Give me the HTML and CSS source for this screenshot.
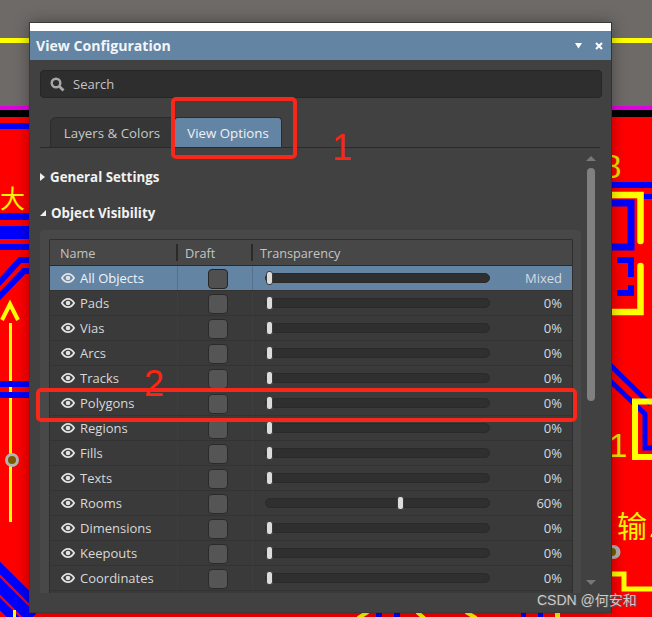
FILE: index.html
```html
<!DOCTYPE html>
<html lang="en">
<head>
  <meta charset="UTF-8">
  <title>View Configuration</title>
  <link rel="stylesheet" href="styles.css">
</head>
<body>
  <!-- PCB canvas behind the panel -->
  <svg class="board" width="652" height="617" viewBox="0 0 652 617">
    <rect x="0" y="0" width="652" height="617" fill="#6e6a68"/>
    <rect x="0" y="38" width="652" height="5" fill="#ffff00"/>
    <rect x="0" y="106" width="652" height="511" fill="#ff0000"/>
    <rect x="0" y="106" width="652" height="4" fill="#e000e0"/>
    <rect x="0" y="110" width="652" height="7" fill="#000"/>

    <!-- left side -->
    <rect x="0" y="123" width="30" height="6" fill="#0000ff"/>
    <rect x="0" y="213" width="30" height="7" fill="#0000ff"/>
    <rect x="0" y="226" width="30" height="13" fill="#0000ff"/>
    <rect x="0" y="244" width="30" height="6" fill="#0000ff"/>
    <path d="M-2 284 L20 260 L30 260 M-2 298 L24 271 L30 271" stroke="#0000ff" stroke-width="6" fill="none"/>
    <path d="M2 320 L10 304 L18 320" stroke="#ffff00" stroke-width="4" fill="none"/>
    <rect x="9" y="323" width="3" height="199" fill="#ffff00"/>
    <rect x="0" y="381" width="30" height="6" fill="#0000ff"/>
    <rect x="0" y="392" width="30" height="6" fill="#0000ff"/>
    <circle cx="12" cy="460" r="7" fill="#b4b4b4"/>
    <circle cx="12" cy="460" r="4" fill="#7a5c00"/>
    <path d="M-4 564 L32 600" stroke="#0000ff" stroke-width="9" fill="none"/>
    <path d="M-6 580 L32 618" stroke="#0000ff" stroke-width="12" fill="none"/>
    <path d="M-4 600 L16 620" stroke="#0000ff" stroke-width="9" fill="none"/>
    <rect x="13" y="610" width="3" height="7" fill="#ffff00"/>
    <text x="0" y="208" class="silk silk-small">大</text>

    <!-- right side -->
    <rect x="612" y="182" width="40" height="6" fill="#0000ff"/>
    <rect x="644" y="194" width="8" height="5" fill="#0000ff"/>
    <path d="M612 203 L631 203 L631 247 L612 247" stroke="#0000ff" stroke-width="7" fill="none"/>
    <path d="M612 195 L640.5 195 L640.5 241" stroke="#ffff00" stroke-width="6.5" stroke-linecap="round" fill="none"/>
    <path d="M617 260 L631 260 L631 277 M631 285 L631 293 L617 293" stroke="#0000ff" stroke-width="6" fill="none"/>
    <path d="M640.5 266 L640.5 312 L612 312" stroke="#ffff00" stroke-width="6.5" stroke-linecap="round" fill="none"/>
    <path d="M605 360 L650 404 M605 376 L645 414 L645 448 L652 448" stroke="#0000ff" stroke-width="5" fill="none"/>
    <path d="M652 401.5 L635 401.5 L635 457 L652 457" stroke="#ffff00" stroke-width="6" fill="none"/>
    <path d="M612 574 L624 574 L624 589 L652 589" stroke="#ffff00" stroke-width="5" fill="none"/>
    <circle cx="613.5" cy="552" r="7" fill="#b4b4b4"/>
    <circle cx="612" cy="552" r="4" fill="#7a5c00"/>
    <text x="603" y="178" class="silk-num">8</text>
    <text x="609" y="457" class="silk-num">1</text>
    <text x="617" y="537" class="silk">输</text>
    <path d="M651 537 L652 534" stroke="#ffff00" stroke-width="1.5"/>

    <!-- below the panel -->
    <path d="M358 618 L368 612 M417 612 L424 618 M466 612 L476 618" stroke="#ffff00" stroke-width="4"/>
    <rect x="376" y="612" width="6" height="5" fill="#0000ff"/>
    <rect x="394" y="612" width="6" height="5" fill="#0000ff"/>
    <rect x="521" y="612" width="5" height="5" fill="#0000ff"/>
    <rect x="538" y="612" width="5" height="5" fill="#0000ff"/>
    <rect x="555" y="612" width="5" height="5" fill="#ffff00"/>
  </svg>

  <div class="panel">
    <div class="panel-strip"></div>
    <div class="panel-head">
      <span class="panel-title">View Configuration</span>
      <span class="head-tools">
        <svg width="7" height="6" viewBox="0 0 7 6"><path d="M0 0 H7 L3.5 5.5 Z" fill="#fff"/></svg>
        <svg width="8" height="8" viewBox="0 0 8 8"><path d="M1 1 L7 7 M7 1 L1 7" stroke="#fff" stroke-width="2"/></svg>
      </span>
    </div>

    <div class="panel-body">
      <div class="search">
        <svg width="15" height="15" viewBox="0 0 15 15"><circle cx="6" cy="6" r="4.3" fill="none" stroke="#a8a8a8" stroke-width="2.4"/><path d="M9.2 9.2 L13.5 13.5" stroke="#a8a8a8" stroke-width="2.8"/></svg>
        <span>Search</span>
      </div>

      <div class="tabs">
        <div class="tab">Layers &amp; Colors</div>
        <div class="tab tab-on">View Options</div>
      </div>

      <div class="scroll-area">
        <div class="content">
          <div class="section"><i class="arrow-right"></i>General Settings</div>
          <div class="section section-open"><i class="arrow-open"></i>Object Visibility</div>

          <div class="table-wrap">
            <div class="vis-table">
              <div class="row head-row">
                <div class="c-name head-cell">Name</div>
                <div class="c-draft head-cell">Draft</div>
                <div class="c-trans head-cell">Transparency</div>
              </div>
              <div class="row row-on">
                <div class="c-name"><svg class="eye"><use href="#eye"/></svg>All Objects</div>
                <div class="c-draft"><span class="check"></span></div>
                <div class="c-trans"><span class="slider"><i class="knob" style="left:0"></i></span><span class="val">Mixed</span></div>
              </div>
              <div class="row">
                <div class="c-name"><svg class="eye"><use href="#eye"/></svg>Pads</div>
                <div class="c-draft"><span class="check"></span></div>
                <div class="c-trans"><span class="slider"><i class="knob" style="left:0"></i></span><span class="val">0%</span></div>
              </div>
              <div class="row">
                <div class="c-name"><svg class="eye"><use href="#eye"/></svg>Vias</div>
                <div class="c-draft"><span class="check"></span></div>
                <div class="c-trans"><span class="slider"><i class="knob" style="left:0"></i></span><span class="val">0%</span></div>
              </div>
              <div class="row">
                <div class="c-name"><svg class="eye"><use href="#eye"/></svg>Arcs</div>
                <div class="c-draft"><span class="check"></span></div>
                <div class="c-trans"><span class="slider"><i class="knob" style="left:0"></i></span><span class="val">0%</span></div>
              </div>
              <div class="row">
                <div class="c-name"><svg class="eye"><use href="#eye"/></svg>Tracks</div>
                <div class="c-draft"><span class="check"></span></div>
                <div class="c-trans"><span class="slider"><i class="knob" style="left:0"></i></span><span class="val">0%</span></div>
              </div>
              <div class="row">
                <div class="c-name"><svg class="eye"><use href="#eye"/></svg>Polygons</div>
                <div class="c-draft"><span class="check"></span></div>
                <div class="c-trans"><span class="slider"><i class="knob" style="left:0"></i></span><span class="val">0%</span></div>
              </div>
              <div class="row">
                <div class="c-name"><svg class="eye"><use href="#eye"/></svg>Regions</div>
                <div class="c-draft"><span class="check"></span></div>
                <div class="c-trans"><span class="slider"><i class="knob" style="left:0"></i></span><span class="val">0%</span></div>
              </div>
              <div class="row">
                <div class="c-name"><svg class="eye"><use href="#eye"/></svg>Fills</div>
                <div class="c-draft"><span class="check"></span></div>
                <div class="c-trans"><span class="slider"><i class="knob" style="left:0"></i></span><span class="val">0%</span></div>
              </div>
              <div class="row">
                <div class="c-name"><svg class="eye"><use href="#eye"/></svg>Texts</div>
                <div class="c-draft"><span class="check"></span></div>
                <div class="c-trans"><span class="slider"><i class="knob" style="left:0"></i></span><span class="val">0%</span></div>
              </div>
              <div class="row">
                <div class="c-name"><svg class="eye"><use href="#eye"/></svg>Rooms</div>
                <div class="c-draft"><span class="check"></span></div>
                <div class="c-trans"><span class="slider"><i class="knob" style="left:131px"></i></span><span class="val">60%</span></div>
              </div>
              <div class="row">
                <div class="c-name"><svg class="eye"><use href="#eye"/></svg>Dimensions</div>
                <div class="c-draft"><span class="check"></span></div>
                <div class="c-trans"><span class="slider"><i class="knob" style="left:0"></i></span><span class="val">0%</span></div>
              </div>
              <div class="row">
                <div class="c-name"><svg class="eye"><use href="#eye"/></svg>Keepouts</div>
                <div class="c-draft"><span class="check"></span></div>
                <div class="c-trans"><span class="slider"><i class="knob" style="left:0"></i></span><span class="val">0%</span></div>
              </div>
              <div class="row">
                <div class="c-name"><svg class="eye"><use href="#eye"/></svg>Coordinates</div>
                <div class="c-draft"><span class="check"></span></div>
                <div class="c-trans"><span class="slider"><i class="knob" style="left:0"></i></span><span class="val">0%</span></div>
              </div>
            </div>
          </div>
        </div>

        <div class="scrollbar">
          <i class="sb-up"></i>
          <div class="sb-track"><div class="sb-thumb"></div></div>
          <i class="sb-down"></i>
        </div>
      </div>
    </div>
  </div>

  <!-- hand drawn red notes on the screenshot -->
  <div class="mark mark-1"></div>
  <div class="mark mark-2"></div>
  <span class="mark-num num-1">1</span>
  <span class="mark-num num-2">2</span>
  <span class="watermark">CSDN @何安和</span>

  <svg width="0" height="0" class="defs">
    <symbol id="eye" viewBox="0 0 14 10">
      <path d="M0.9 5 C3 1.6 5 0.9 7 0.9 C9 0.9 11 1.6 13.1 5 C11 8.4 9 9.1 7 9.1 C5 9.1 3 8.4 0.9 5 Z" fill="none" stroke="#e2e2e2" stroke-width="1.8"/>
      <circle cx="7" cy="5" r="2.3" fill="#e2e2e2"/>
    </symbol>
  </svg>
</body>
</html>
```

FILE: styles.css
```css
/* page */
body {
  margin: 0;
  width: 652px;
  height: 617px;
  overflow: hidden;
  position: relative;
  font-family: "Open Sans", "Noto Sans", sans-serif;
  font-size: 13px;
  color: #d8d8d8;
  background: #6e6a68;
}

.board {
  position: absolute;
  left: 0;
  top: 0;
}

.silk {
  font-family: "Noto Sans CJK SC", sans-serif;
  font-size: 30px;
  fill: #f6f600;
}

.silk-small {
  font-size: 25px;
}

.silk-num {
  font-family: "Liberation Sans", sans-serif;
  font-size: 33px;
  fill: #e8e800;
}

.defs {
  position: absolute;
}

/* panel */
.panel {
  position: absolute;
  left: 29px;
  top: 22px;
  width: 583px;
  height: 591px;
  border: 1px solid #3a3a3a;
  border-right-color: #333;
  background: #414141;
  box-shadow: 0 0 14px rgba(0, 0, 0, 0.35);
  display: flex;
  flex-direction: column;
  box-sizing: border-box;
}

.panel-strip {
  height: 8px;
  background: #fff;
}

.panel-head {
  height: 29px;
  background: #6484a4;
  display: flex;
  align-items: center;
  justify-content: space-between;
  padding: 0 8px 0 6px;
}

.panel-title {
  font-weight: 700;
  font-size: 14.1px;
  color: #f2f5f8;
}

.head-tools {
  display: flex;
  align-items: center;
  gap: 13px;
}

.panel-body {
  flex: 1;
  padding: 10px 9px 0 10px;
  display: flex;
  flex-direction: column;
  min-height: 0;
}

/* search */
.search {
  height: 28px;
  box-sizing: border-box;
  background: #2e2e2e;
  border: 1px solid #262626;
  border-radius: 4px;
  display: flex;
  align-items: center;
  gap: 8px;
  padding-left: 9px;
  color: #c4c4c4;
  font-size: 13px;
}

/* tabs */
.tabs {
  margin-top: 19px;
  height: 31px;
  box-sizing: border-box;
  border-bottom: 1px solid #2a2a2a;
  padding-left: 10px;
  display: flex;
  width: 560px;
}

.tab {
  width: 124px;
  box-sizing: border-box;
  background: #363636;
  border: 1px solid #2c2c2c;
  border-bottom: none;
  border-radius: 6px 0 0 0;
  display: flex;
  align-items: center;
  justify-content: center;
  font-size: 13.3px;
  color: #c8c8c8;
}

.tab-on {
  width: 108px;
  background: #6484a4;
  border-radius: 4px 4px 0 0;
  color: #eef2f6;
}

/* sections */
.scroll-area {
  flex: 1;
  display: flex;
  min-height: 0;
}

.content {
  width: 541px;
}

.section {
  height: 36px;
  display: flex;
  align-items: center;
  font-weight: 700;
  font-size: 13.3px;
  color: #f2f2f2;
  gap: 5px;
}

.section:first-child {
  margin-top: 11px;
}

.arrow-right {
  width: 0;
  height: 0;
  border-left: 5px solid #f0f0f0;
  border-top: 4.5px solid transparent;
  border-bottom: 4.5px solid transparent;
}

.arrow-open {
  width: 0;
  height: 0;
  border-right: 6px solid #f0f0f0;
  border-top: 6px solid transparent;
}

/* table */
.table-wrap {
  background: #484848;
  padding: 9px 0 0 9px;
  border-radius: 4px 4px 0 0;
  height: 363px;
  box-sizing: border-box;
  margin-top: -1px;
  width: 541px;
}

.vis-table {
  width: 524px;
  box-sizing: border-box;
  border: 1px solid #2e2e2e;
  border-bottom: none;
  background: #3a3a3a;
  height: 100%;
  overflow: hidden;
  border-radius: 2px 2px 0 0;
}

.row {
  height: 25px;
  display: flex;
  align-items: center;
  box-sizing: border-box;
  border-bottom: 1px solid #333;
}

.head-row {
  height: 26px;
  background: #474747;
  border-bottom: 1px solid #2a2a2a;
}

.row-on {
  background: #6484a4;
  color: #f0f4f8;
}

.c-name {
  width: 127px;
  display: flex;
  align-items: center;
  padding-left: 11px;
  box-sizing: border-box;
  height: 100%;
  font-size: 13px;
}

.c-draft {
  width: 75px;
  height: 100%;
  display: flex;
  align-items: center;
  justify-content: center;
  box-sizing: border-box;
  border-left: 1px solid #3e3e3e;
  padding-left: 5px;
}

.c-trans {
  flex: 1;
  height: 100%;
  display: flex;
  align-items: center;
  box-sizing: border-box;
  border-left: 1px solid #3e3e3e;
  padding-left: 12px;
}

.row-on .c-draft,
.row-on .c-trans {
  border-left-color: #54708c;
}

.head-cell {
  color: #c4c4c4;
  font-size: 12.7px;
  border-left: none;
  justify-content: flex-start;
  position: relative;
}

.head-row .c-name {
  padding-left: 10px;
}

.head-row .c-draft,
.head-row .c-trans {
  padding-left: 8px;
  border-left: none;
}

.head-row .c-draft::before,
.head-row .c-trans::before {
  content: "";
  position: absolute;
  left: -1px;
  top: 4px;
  bottom: 4px;
  width: 2px;
  background: #2a2a2a;
}

.eye {
  width: 14px;
  height: 10px;
  margin-right: 5px;
  margin-top: -1px;
  flex: none;
}

.check {
  width: 20px;
  height: 20px;
  margin-top: 2px;
  box-sizing: border-box;
  background: #555;
  border: 1px solid #2a2a2a;
  border-radius: 4px;
}

.row-on .check {
  background: #505050;
  border-color: #252525;
}

.slider {
  position: relative;
  width: 225px;
  height: 10px;
  box-sizing: border-box;
  background: #2f2f2f;
  border: 1px solid #2a2a2a;
  border-radius: 5px;
}

.knob {
  position: absolute;
  top: -3px;
  width: 7px;
  height: 14px;
  box-sizing: border-box;
  background: #dcdcdc;
  border: 1px solid #3a3a3a;
  border-radius: 3px;
}

.val {
  flex: 1;
  text-align: right;
  padding-right: 10px;
  font-size: 13px;
  color: #d4dae0;
}

/* scrollbar */
.scrollbar {
  width: 20px;
  display: flex;
  flex-direction: column;
  align-items: center;
  padding-top: 8px;
  box-sizing: border-box;
}

.sb-up {
  width: 0;
  height: 0;
  border-left: 5px solid transparent;
  border-right: 5px solid transparent;
  border-bottom: 5px solid #777;
}

.sb-track {
  flex: 1;
  margin-top: 7px;
  width: 8px;
}

.sb-thumb {
  height: 233px;
  background: #808080;
  border-radius: 4px;
}

.sb-down {
  width: 0;
  height: 0;
  border-left: 5px solid transparent;
  border-right: 5px solid transparent;
  border-top: 5px solid #777;
  margin-bottom: 27px;
}

/* annotations */
.mark {
  position: absolute;
  box-sizing: border-box;
  border: 4px solid #f9261a;
  border-radius: 5px;
}

.mark-1 {
  left: 171px;
  top: 97px;
  width: 126px;
  height: 62px;
}

.mark-2 {
  left: 36px;
  top: 388px;
  width: 541px;
  height: 34px;
}

.mark-num {
  position: absolute;
  font-family: "Liberation Sans", sans-serif;
  font-size: 36px;
  line-height: 36px;
  color: #ff2414;
}

.num-1 {
  left: 332px;
  top: 130px;
}

.num-2 {
  left: 144px;
  top: 366px;
}

.watermark {
  position: absolute;
  left: 537px;
  top: 589px;
  font-family: "Liberation Sans", "Noto Sans CJK SC", sans-serif;
  font-size: 14px;
  color: #cacaca;
  text-shadow: 1px 1px 1px #555;
}
```
